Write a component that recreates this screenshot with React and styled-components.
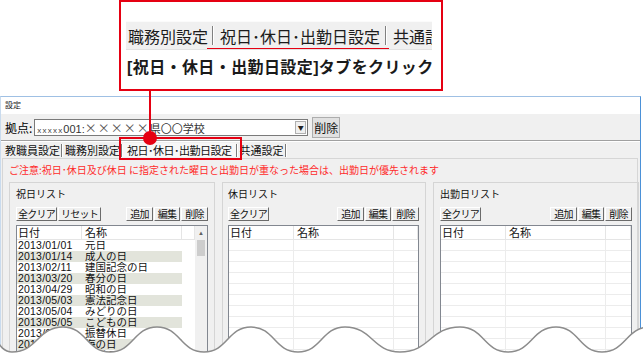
import React from 'react'
import styled, { createGlobalStyle } from 'styled-components'

const RED = '#e50012'

const Global = createGlobalStyle`
  html, body { margin: 0; padding: 0; background: #fff; }
  body { font-family: "Liberation Sans", "Noto Sans CJK JP", sans-serif; color: #000; }
`

const Stage = styled.div`
  position: relative;
  width: 643px;
  height: 356px;
  overflow: hidden;
  background: #fff;
`

/* ---- callout on top ---- */
const Callout = styled.section`
  box-sizing: border-box;
  margin-left: 119px;
  width: 324px;
  height: 91px;
  border: 2px solid ${RED};
  padding-top: 19px;
`

const Strip = styled.div`
  display: flex;
  align-items: center;
  box-sizing: border-box;
  margin-left: 5px;
  width: 306px;
  height: 29px;
  background: #f0f0f0;
  border-top: 1px solid #fbfbfb;
  border-bottom: 1px solid #e2e2e2;
  overflow: hidden;
  white-space: nowrap;
  font-family: "Noto Sans CJK JP", sans-serif;
  font-size: 16px;
  line-height: 20px;
  color: #1c1c1c;
`

const StripTab = styled.span`
  flex: none;
  padding: ${p => (p.$first ? '0 4px 0 2px' : '0 5px 0 6px')};
`

const StripSep = styled.span`
  flex: none;
  width: 1px;
  height: 19px;
  background: #808080;
  border-right: 1px solid #fff;
`

const Picked = styled.span`
  position: relative;
  display: flex;
  align-items: center;
  align-self: stretch;
  &::after {
    content: '';
    position: absolute;
    left: -5px;
    right: -2px;
    bottom: -1px;
    height: 2px;
    background: ${RED};
  }
`

const Caption = styled.p`
  margin: 9px 0 0;
  padding-left: 6px;
  font-family: "Liberation Sans", "Noto Sans CJK JP", sans-serif;
  font-size: 16px;
  line-height: 18px;
  font-weight: 700;
  letter-spacing: 0.4px;
  color: #1a1a1a;
  white-space: nowrap;
`

/* ---- window ---- */
const Window = styled.div`
  box-sizing: border-box;
  margin-top: 5px;
  width: 641px;
  height: 260px;
  border-top: 1px solid #9fc0e4;
  border-left: 1px solid #c9dbee;
  border-right: 1px solid #4b91d8;
  background: #f0f0f0;
`

const TitleBar = styled.div`
  height: 17px;
  padding-left: 4px;
  background: #fff;
  font-family: "Noto Sans CJK JP", sans-serif;
  font-size: 8px;
  line-height: 15px;
  color: #222;
`

const Toolbar = styled.div`
  display: flex;
  align-items: center;
  height: 26px;
  padding-left: 4px;
  border-bottom: 1px solid #a0a0a0;
  font-family: "Noto Sans CJK JP", sans-serif;
  font-size: 12px;
`

const Combo = styled.div`
  display: flex;
  align-items: center;
  box-sizing: border-box;
  margin-left: 2px;
  width: 274px;
  height: 17px;
  padding-left: 2px;
  border: 1px solid #7a7a7a;
  background: #fff;
  font-size: 11px;
  color: #333;
  white-space: nowrap;
  overflow: hidden;
`

const ComboText = styled.span`
  flex: 1;
  font-family: "Noto Sans CJK JP", sans-serif;
`

const Tiny = styled.span`
  font-family: "Liberation Sans", sans-serif;
  font-size: 8px;
  letter-spacing: 1.2px;
  color: #444;
`

const Latin = styled.span`
  font-family: "Liberation Sans", sans-serif;
`

const Crosses = styled.span`
  font-size: 12px;
  letter-spacing: 1px;
  color: #555;
`

const DropBtn = styled.span`
  display: flex;
  align-items: center;
  justify-content: center;
  box-sizing: border-box;
  flex: none;
  width: 11px;
  height: 13px;
  margin-right: 1px;
  border: 1px solid #b0b0b0;
  background: #f0f0f0;
  font-size: 6px;
  color: #222;
`

const WinButton = styled.button`
  box-sizing: border-box;
  margin-left: 4px;
  width: 28px;
  height: 21px;
  padding: 0;
  border: 1px solid #adadad;
  background: #e1e1e1;
  font-family: inherit;
  font-size: 12px;
  color: #111;
`

const TabRow = styled.div`
  display: flex;
  align-items: center;
  height: 16px;
  padding-left: 2px;
  border-top: 1px solid #fff;
  font-family: "Noto Sans CJK JP", sans-serif;
  font-size: 11px;
  line-height: 14px;
  color: #111;
  white-space: nowrap;
`

const WinTab = styled.span`
  padding: ${p => (p.$on ? '0 4px' : '0 1px 0 2px')};
  letter-spacing: ${p => (p.$on ? '-0.5px' : '0')};
  background: ${p => (p.$on ? '#f7f7f7' : 'transparent')};
`

const WinSep = styled.span`
  width: 1px;
  height: 13px;
  background: #7a7a7a;
  border-right: 1px solid #fff;
`

const Panel = styled.div`
  box-sizing: border-box;
  margin: 0 2px 0 1px;
  height: 200px;
  padding-left: 3px;
  border: 1px solid #d6d6d6;
  border-bottom: none;
`

const Warning = styled.p`
  margin: 4px 0 0 3px;
  height: 13px;
  font-family: "Noto Sans CJK JP", sans-serif;
  font-size: 10px;
  line-height: 13px;
  color: #ff2b2b;
  white-space: nowrap;
`

const Groups = styled.div`
  display: grid;
  grid-template-columns: 206px 204px 206px;
  column-gap: 7px;
  margin: 6px 0 0 3px;
`

const Group = styled.div`
  box-sizing: border-box;
  height: 180px;
  padding: 5px 6px 0 ${p => p.$pl || 6}px;
  border: 1px solid #d5d5d5;
  min-width: 0;
`

const GroupLabel = styled.div`
  height: 12px;
  font-family: "Noto Sans CJK JP", sans-serif;
  font-size: 10px;
  line-height: 12px;
  color: #111;
`

const BtnRow = styled.div`
  display: flex;
  justify-content: space-between;
  margin-top: 7px;
  height: 14px;
`

const BtnSet = styled.div`
  display: flex;
  gap: 1px;
`

const SmallBtn = styled.button`
  box-sizing: border-box;
  width: ${p => p.$w}px;
  height: 14px;
  padding: 0;
  border: 1px solid;
  border-color: #fff #6b6b6b #6b6b6b #fff;
  background: #f0f0f0;
  font-family: "Noto Sans CJK JP", sans-serif;
  font-size: 10px;
  line-height: 12px;
  letter-spacing: -0.8px;
  white-space: nowrap;
  color: #111;
`

const List = styled.div`
  display: flex;
  box-sizing: border-box;
  margin-top: 4px;
  height: 140px;
  border: 1px solid #828790;
  background: #fff;
`

const ListMain = styled.div`
  flex: 1;
  min-width: 0;
`

const ListHead = styled.div`
  display: grid;
  grid-template-columns: 65px 100px 1fr;
  height: 13px;
  border-bottom: 1px solid #e5e5e5;
`

const HeadCell = styled.div`
  padding-left: ${p => (p.$first ? 1 : 3)}px;
  border-right: 1px solid #e5e5e5;
  font-family: "Noto Sans CJK JP", sans-serif;
  font-size: 11px;
  line-height: 13px;
  color: #111;
`

const Row = styled.div`
  display: grid;
  grid-template-columns: 65px 100px 1fr;
  box-sizing: border-box;
  height: 11px;
  border-bottom: ${p => (p.$grid ? '1px solid #ececec' : 'none')};
`

const Cell = styled.div`
  padding-left: ${p => (p.$first ? 1 : 3)}px;
  background: ${p => (p.$alt ? '#e2e4db' : 'transparent')};
  border-right: ${p => (p.$grid ? '1px solid #ececec' : 'none')};
  font-size: 10.5px;
  line-height: 11px;
  letter-spacing: ${p => (p.$first ? '0.2px' : '0')};
  color: #111;
  white-space: nowrap;
`

const Scroll = styled.div`
  display: flex;
  flex-direction: column;
  width: 12px;
  background: #f0f0f0;
`

const ScrollArrow = styled.div`
  height: 13px;
  display: flex;
  align-items: center;
  justify-content: center;
  font-size: 6px;
  color: #606060;
`

const Thumb = styled.div`
  margin: 1px 2px 0;
  height: 16px;
  background: #cdcdcd;
`

const Leader = styled.div`
  position: absolute;
  left: 149px;
  top: 90px;
  width: 2px;
  height: 46px;
  background: ${RED};
`

const Pin = styled.div`
  position: absolute;
  left: 143px;
  top: 131px;
  width: 14px;
  height: 14px;
  border-radius: 50%;
  background: ${RED};
`

const TabMark = styled.div`
  position: absolute;
  left: 119px;
  top: 137px;
  box-sizing: border-box;
  width: 123px;
  height: 23px;
  border: 2px solid ${RED};
`

const Tear = styled.svg`
  position: absolute;
  left: 0;
  bottom: 0;
  display: block;
`

const holidays = [
  ['2013/01/01', '元日'],
  ['2013/01/14', '成人の日'],
  ['2013/02/11', '建国記念の日'],
  ['2013/03/20', '春分の日'],
  ['2013/04/29', '昭和の日'],
  ['2013/05/03', '憲法記念日'],
  ['2013/05/04', 'みどりの日'],
  ['2013/05/05', 'こどもの日'],
  ['2013/05/06', '振替休日'],
  ['2013/07/15', '海の日'],
  ['2013/09/16', '敬老の日'],
]

// wave extremes (x, y) in the 40px high strip
const wavePts = [
  [-20, 11], [12, 36], [63, 11], [110, 36], [157, 11], [204, 36], [251, 11],
  [298, 36], [345, 11], [400, 36], [460, 11], [508, 36], [556, 11], [602, 36], [650, 11],
]

const wavePath = () => {
  let d = `M${wavePts[0][0]},${wavePts[0][1]}`
  for (let i = 1; i < wavePts.length; i++) {
    const [x0, y0] = wavePts[i - 1]
    const [x1, y1] = wavePts[i]
    const h = (x1 - x0) / 2
    d += ` C${x0 + h},${y0} ${x1 - h},${y1} ${x1},${y1}`
  }
  return d
}

const GroupBox = ({ title, reset, pl, children }) => (
  <Group $pl={pl}>
    <GroupLabel>{title}</GroupLabel>
    <BtnRow>
      <BtnSet>
        <SmallBtn $w={41}>全クリア</SmallBtn>
        {reset && <SmallBtn $w={43}>リセット</SmallBtn>}
      </BtnSet>
      <BtnSet>
        <SmallBtn $w={27}>追加</SmallBtn>
        <SmallBtn $w={26}>編集</SmallBtn>
        <SmallBtn $w={27}>削除</SmallBtn>
      </BtnSet>
    </BtnRow>
    {children}
  </Group>
)

const Head = () => (
  <ListHead>
    <HeadCell $first>日付</HeadCell>
    <HeadCell>名称</HeadCell>
    <HeadCell />
  </ListHead>
)

const EmptyList = () => (
  <List>
    <ListMain>
      <Head />
      {Array.from({ length: 11 }).map((_, i) => (
        <Row key={i} $grid>
          <Cell $grid />
          <Cell $grid />
          <Cell />
        </Row>
      ))}
    </ListMain>
  </List>
)

const App = () => {
  return (
    <Stage>
      <Global />
      <Callout>
        <Strip>
          <StripTab $first>職務別設定</StripTab>
          <Picked>
            <StripSep />
            <StripTab>祝日･休日･出勤日設定</StripTab>
            <StripSep />
          </Picked>
          <StripTab>共通設定</StripTab>
        </Strip>
        <Caption>[祝日・休日・出勤日設定]タブをクリック</Caption>
      </Callout>

      <Window>
        <TitleBar>設定</TitleBar>
        <Toolbar>
          <span>拠点:</span>
          <Combo>
            <ComboText>
              <Tiny>xxxxx</Tiny><Latin>001:</Latin><Crosses>×××××</Crosses>県〇〇学校
            </ComboText>
            <DropBtn>▼</DropBtn>
          </Combo>
          <WinButton>削除</WinButton>
        </Toolbar>
        <TabRow>
          <WinTab>教職員設定</WinTab>
          <WinSep />
          <WinTab>職務別設定</WinTab>
          <WinSep />
          <WinTab $on>祝日･休日･出勤日設定</WinTab>
          <WinSep />
          <WinTab>共通設定</WinTab>
          <WinSep />
        </TabRow>
        <Panel>
          <Warning>ご注意:祝日･休日及び休日 に指定された曜日と出勤日が重なった場合は、出勤日が優先されます</Warning>
          <Groups>
            <GroupBox title="祝日リスト" reset>
              <List>
                <ListMain>
                  <Head />
                  {holidays.map(([date, name], i) => (
                    <Row key={date}>
                      <Cell $first $alt={i % 2 === 1}>{date}</Cell>
                      <Cell $alt={i % 2 === 1}>{name}</Cell>
                      <Cell />
                    </Row>
                  ))}
                </ListMain>
                <Scroll>
                  <ScrollArrow>▲</ScrollArrow>
                  <Thumb />
                </Scroll>
              </List>
            </GroupBox>
            <GroupBox title="休日リスト" pl={5}>
              <EmptyList />
            </GroupBox>
            <GroupBox title="出勤日リスト" pl={6}>
              <EmptyList />
            </GroupBox>
          </Groups>
        </Panel>
      </Window>

      <Leader />
      <TabMark />
      <Pin />

      <Tear width="643" height="40" viewBox="0 0 643 40">
        <path d={`${wavePath()} L660,40 L-20,40 Z`} fill="#fff" />
        <path d={wavePath()} fill="none" stroke="#8c8c8c" strokeWidth="1.5" />
      </Tear>
    </Stage>
  )
}

export default App
